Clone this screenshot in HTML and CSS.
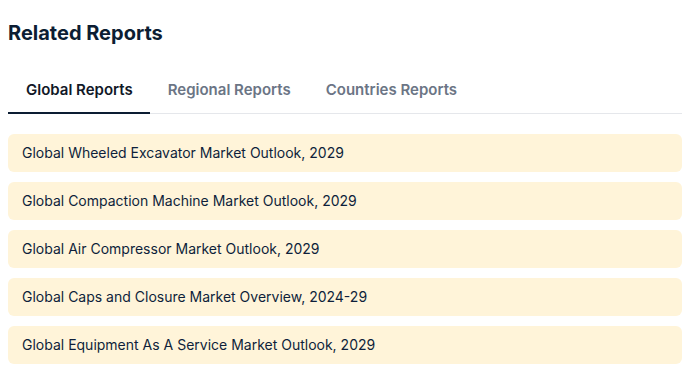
FILE: index.html
```
<!DOCTYPE html>
<html>
<head>
    <title>Related Reports</title>
    <link rel="stylesheet" href="styles.css">
</head>
<body>
    <div class="related">
        <h2 class="related-title">Related Reports</h2>
        <div class="tabs">
            <button class="tab active">Global Reports</button>
            <button class="tab">Regional Reports</button>
            <button class="tab">Countries Reports</button>
        </div>
        <ul class="report-list">
            <li class="report-item"><a href="#">Global Wheeled Excavator Market Outlook, 2029</a></li>
            <li class="report-item"><a href="#">Global Compaction Machine Market Outlook, 2029</a></li>
            <li class="report-item"><a href="#">Global Air Compressor Market Outlook, 2029</a></li>
            <li class="report-item"><a href="#">Global Caps and Closure Market Overview, 2024-29</a></li>
            <li class="report-item"><a href="#">Global Equipment As A Service Market Outlook, 2029</a></li>
        </ul>
    </div>
</body>
</html>
```

FILE: styles.css
```
body {
    margin: 0;
    background-color: #fff;
    font-family: Inter, "Noto Sans", sans-serif;
}

.related {
    padding: 19px 12px 0 8px;
}

.related-title {
    margin: 0 0 21px;
    font-size: 20px;
    line-height: 28px;
    font-weight: 700;
    color: #0c1d33;
}

.tabs {
    display: flex;
    border-bottom: 1px solid #e5e7eb;
}

.tab {
    padding: 11px 17px 11px 18px;
    margin-bottom: -1px;
    border: none;
    border-bottom: 2px solid transparent;
    background: none;
    font-family: inherit;
    font-size: 15px;
    line-height: 22px;
    font-weight: 600;
    color: #6b7585;
    cursor: pointer;
}

.tab.active {
    color: #111827;
    border-bottom-color: #0c1d33;
}

.report-list {
    list-style: none;
    margin: 20px 0 0;
    padding: 0;
    display: flex;
    flex-direction: column;
    gap: 10px;
}

.report-item {
    background-color: #fff4d9;
    border-radius: 6px;
    padding: 9px 14px;
}

.report-item a {
    display: block;
    font-size: 14px;
    line-height: 20px;
    color: #0e1f3b;
    text-decoration: none;
}
```
